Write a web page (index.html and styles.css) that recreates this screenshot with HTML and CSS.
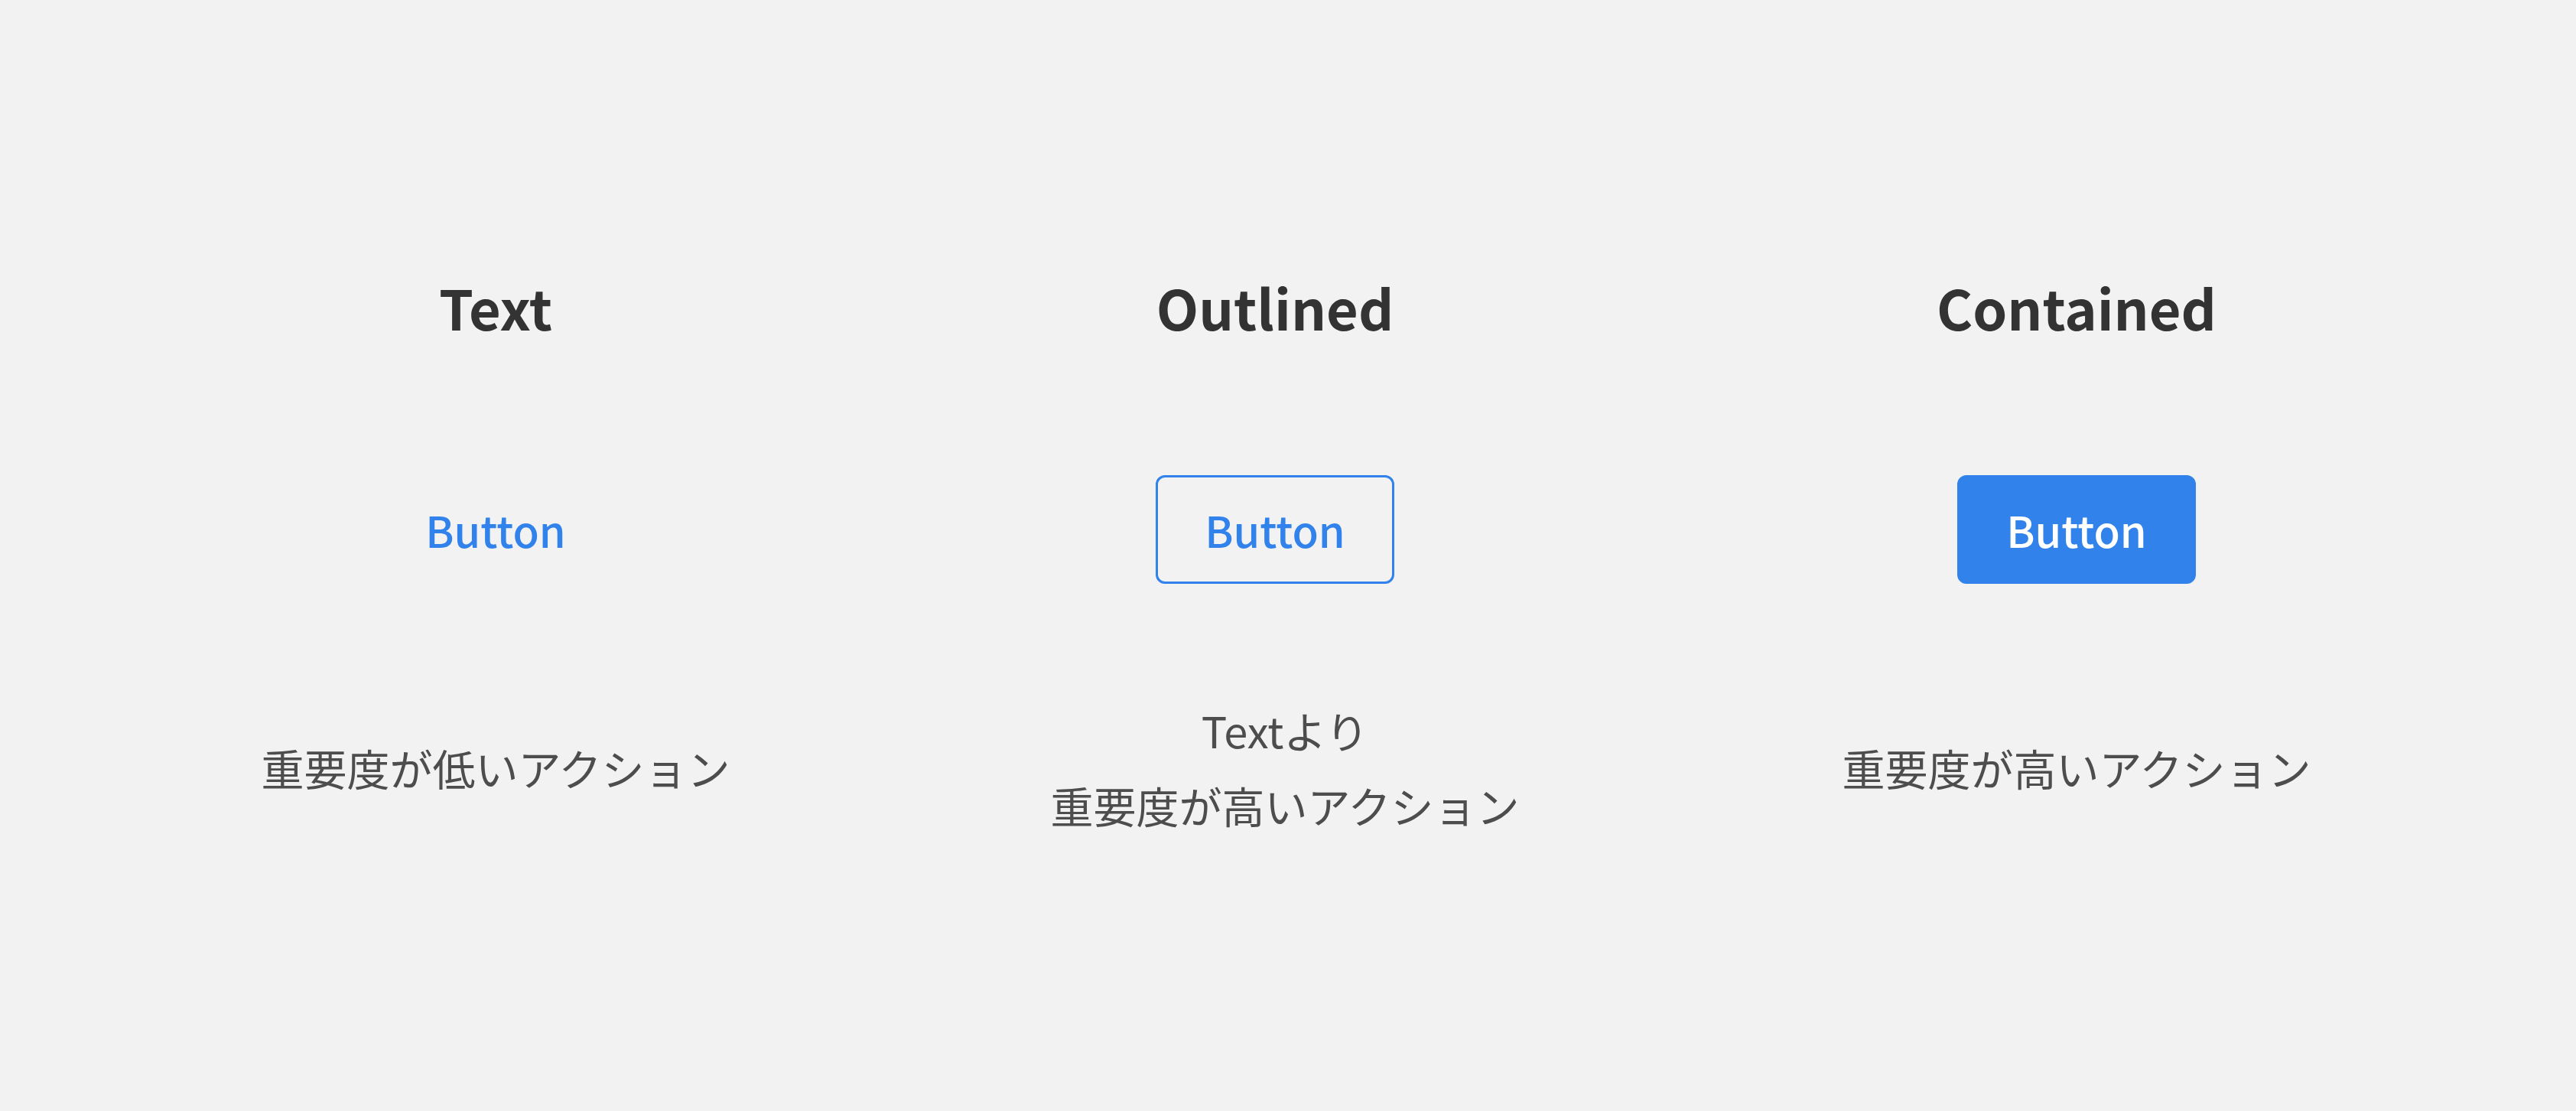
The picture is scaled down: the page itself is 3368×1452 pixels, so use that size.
FILE: index.html
```html
<!DOCTYPE html>
<html lang="ja">
<head>
    <meta charset="UTF-8">
    <meta name="viewport" content="width=device-width, initial-scale=1.0">
    <link rel="stylesheet" href="styles.css">
    <title>Button types</title>
</head>
<body>
    <div class="button-types">
        <div class="type-column">
            <h2 class="type-title">Text</h2>
            <button class="btn btn-text">Button</button>
            <div class="type-note">
                <p>重要度が低いアクション</p>
            </div>
        </div>
        <div class="type-column">
            <h2 class="type-title">Outlined</h2>
            <button class="btn btn-outlined">Button</button>
            <div class="type-note note-shift">
                <p>Textより<br>重要度が高いアクション</p>
            </div>
        </div>
        <div class="type-column">
            <h2 class="type-title">Contained</h2>
            <button class="btn btn-contained">Button</button>
            <div class="type-note">
                <p>重要度が高いアクション</p>
            </div>
        </div>
    </div>
</body>
</html>
```

FILE: styles.css
```css
body {
    margin: 0;
    background-color: #f2f2f2;
    font-family: "Noto Sans CJK JP", "Noto Sans", sans-serif;
}

.button-types {
    display: grid;
    grid-template-columns: 1000px 1038px 1058px;
    padding: 347px 0 0 148px;
}

.type-column {
    display: flex;
    flex-direction: column;
    align-items: center;
}

.type-title {
    margin: 0 0 166px;
    font-size: 72px;
    line-height: 108px;
    font-weight: 700;
    color: #333333;
}

.btn {
    box-sizing: border-box;
    width: 312px;
    height: 142px;
    font-family: inherit;
    font-size: 56px;
    line-height: 84px;
    font-weight: 500;
    border: 3px solid transparent;
    border-radius: 12px;
    background: none;
    color: #3182eb;
    cursor: pointer;
    padding: 0;
}

.btn-outlined {
    border-color: #3182eb;
}

.btn-contained {
    background-color: #3182eb;
    border-color: #3182eb;
    color: #ffffff;
}

.type-note {
    margin-top: 142px;
    height: 196px;
    display: flex;
    align-items: center;
}

.type-note p {
    margin: 0;
    font-size: 56px;
    line-height: 98px;
    color: #4d4d4d;
    text-align: center;
}

.note-shift {
    padding-left: 26px;
}
```
